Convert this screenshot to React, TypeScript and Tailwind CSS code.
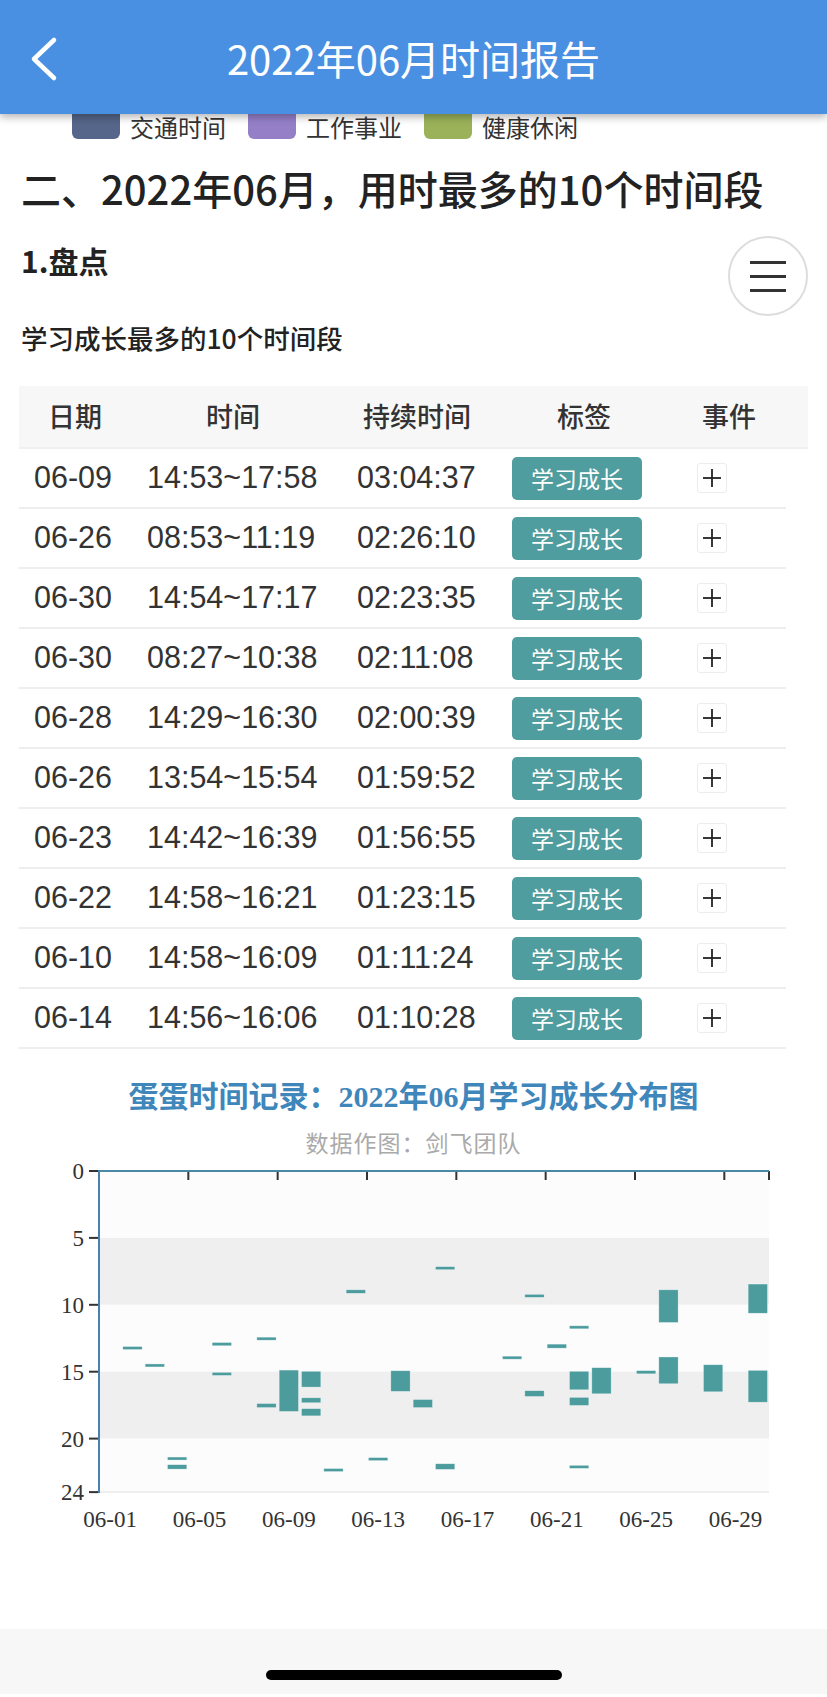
import React from "react";

const rows: [string, string, string][] = [
  ["06-09", "14:53~17:58", "03:04:37"],
  ["06-26", "08:53~11:19", "02:26:10"],
  ["06-30", "14:54~17:17", "02:23:35"],
  ["06-30", "08:27~10:38", "02:11:08"],
  ["06-28", "14:29~16:30", "02:00:39"],
  ["06-26", "13:54~15:54", "01:59:52"],
  ["06-23", "14:42~16:39", "01:56:55"],
  ["06-22", "14:58~16:21", "01:23:15"],
  ["06-10", "14:58~16:09", "01:11:24"],
  ["06-14", "14:56~16:06", "01:10:28"],
];

const bars: [number, number, number][] = [
  [2, 13.12, 13.32],
  [3, 14.42, 14.62],
  [4, 21.38, 21.56],
  [4, 21.95, 22.28],
  [6, 12.82, 13.06],
  [6, 15.05, 15.28],
  [8, 12.42, 12.62],
  [8, 17.38, 17.68],
  [9, 14.88, 17.97],
  [10, 14.97, 16.15],
  [10, 16.95, 17.32],
  [10, 17.76, 18.3],
  [11, 22.24, 22.42],
  [12, 8.88, 9.14],
  [13, 21.42, 21.62],
  [14, 14.93, 16.47],
  [15, 17.08, 17.68],
  [16, 7.15, 7.37],
  [16, 21.88, 22.3],
  [19, 13.84, 14.04],
  [20, 9.22, 9.44],
  [20, 16.42, 16.85],
  [21, 12.94, 13.24],
  [22, 11.57, 11.76],
  [22, 14.97, 16.35],
  [22, 16.92, 17.52],
  [22, 22.0, 22.18],
  [23, 14.7, 16.65],
  [25, 14.92, 15.16],
  [26, 8.88, 11.32],
  [26, 13.9, 15.9],
  [28, 14.48, 16.5],
  [30, 8.45, 10.63],
  [30, 14.9, 17.28],
];

const X0 = 99;
const DW = 22.333;
const Y0 = 14;
const HS = 13.38;
const XR = X0 + 30 * DW;

function Chart() {
  const yOf = (h: number) => Y0 + h * HS;
  const bands = [
    [0, 5, "#fcfcfc"],
    [5, 10, "#efefef"],
    [10, 15, "#fcfcfc"],
    [15, 20, "#efefef"],
    [20, 24, "#fcfcfc"],
  ] as const;
  return (
    <svg width={827} height={390} className="block">
      {bands.map(([a, b, c]) => (
        <rect key={a} x={X0} y={yOf(a)} width={XR - X0} height={yOf(b) - yOf(a)} fill={c} />
      ))}
      <line x1={X0} x2={XR} y1={yOf(24)} y2={yOf(24)} stroke="#eeeeee" strokeWidth={2} />
      {bars.map(([d, s, e], i) => {
        const h = Math.max((e - s) * HS, 3);
        return (
          <rect
            key={i}
            x={X0 + (d - 1) * DW + 1.5}
            y={yOf(s)}
            width={19.3}
            height={h}
            fill="#4c9c9e"
            stroke="#ffffff"
            strokeOpacity={0.5}
            strokeWidth={0.6}
          />
        );
      })}
      {[0, 4, 8, 12, 16, 20, 24, 28, 30].map((d) => (
        <line key={d} x1={X0 + d * DW} x2={X0 + d * DW} y1={Y0} y2={Y0 + 9} stroke="#333" strokeWidth={2} />
      ))}
      {[0, 5, 10, 15, 20, 24].map((h) => (
        <g key={h}>
          <line x1={89} x2={X0} y1={yOf(h)} y2={yOf(h)} stroke="#333" strokeWidth={2} />
          <text
            x={84}
            y={yOf(h) + 8}
            textAnchor="end"
            fontFamily="'Liberation Serif', serif"
            fontSize={23}
            fill="#333"
          >
            {h}
          </text>
        </g>
      ))}
      <line x1={X0} x2={X0} y1={Y0 - 1} y2={yOf(24) + 1} stroke="#4a80b0" strokeWidth={2} />
      <line x1={X0} x2={XR} y1={Y0} y2={Y0} stroke="#4a89a6" strokeWidth={2} />
      {["06-01", "06-05", "06-09", "06-13", "06-17", "06-21", "06-25", "06-29"].map((l, i) => (
        <text
          key={l}
          x={X0 + (i * 4 + 0.5) * DW}
          y={370}
          textAnchor="middle"
          fontFamily="'Liberation Serif', serif"
          fontSize={23}
          fill="#333"
        >
          {l}
        </text>
      ))}
    </svg>
  );
}

export default function App() {
  return (
    <div className="relative w-[827px] h-[1697px] overflow-hidden bg-white font-['Noto_Sans_CJK_SC','Noto_Sans',sans-serif] text-[#333]">
      {/* Header */}
      <div className="relative z-10 h-[114px] bg-[#4a90e2] shadow-[0_3px_8px_rgba(0,0,0,0.3)] flex items-center justify-center">
        <svg className="absolute left-[30px] top-[36px]" width={30} height={46} viewBox="0 0 30 46">
          <polyline points="24,4 4,23 24,42" fill="none" stroke="#fff" strokeWidth={4.5} strokeLinecap="round" strokeLinejoin="round" />
        </svg>
        <div className="text-white text-[40px] leading-[48px] mt-[2px]">2022年06月时间报告</div>
      </div>

      {/* Legend (partially hidden under the header) */}
      <div className="h-[27px] flex items-start pl-[72px]">
        <div className="w-[48px] h-[25px] rounded-b-[6px] bg-[#56668a]" />
        <div className="ml-[10px] text-[24px] leading-[26px] text-[#333]">交通时间</div>
        <div className="ml-[22px] w-[48px] h-[25px] rounded-b-[6px] bg-[#9580c8]" />
        <div className="ml-[10px] text-[24px] leading-[26px] text-[#333]">工作事业</div>
        <div className="ml-[22px] w-[48px] h-[25px] rounded-b-[6px] bg-[#9bb25a]" />
        <div className="ml-[10px] text-[24px] leading-[26px] text-[#333]">健康休闲</div>
      </div>

      {/* Heading */}
      <div className="mt-[23px] pl-[21px] text-[40px] leading-[48px] font-medium text-[#222] whitespace-nowrap">
        二、2022年06月，用时最多的10个时间段
      </div>

      <div className="mt-[30px] pl-[21px] text-[30px] leading-[36px] font-bold text-[#222]">1.盘点</div>

      <div className="mt-[43px] pl-[21px] text-[26.5px] leading-[34px] font-medium text-[#222]">
        学习成长最多的10个时间段
      </div>

      {/* Table */}
      <div className="mt-[31px] pl-[19px]">
        <div className="w-[789px] h-[63px] bg-[#f7f7f7] grid grid-cols-[112px_204px_164px_170px_120px] items-center text-[27px] font-medium text-[#333] border-b-2 border-[#f0f0f0]">
          <div className="text-center">日期</div>
          <div className="text-center">时间</div>
          <div className="text-center">持续时间</div>
          <div className="text-center">标签</div>
          <div className="text-center">事件</div>
        </div>
        {rows.map((r, i) => (
          <div
            key={i}
            className="w-[767px] h-[60px] grid grid-cols-[112px_204px_164px_170px_117px] items-center text-[30.5px] text-[#333] border-b-2 border-[#eeeeee]"
          >
            <div className="pl-[15px] font-['Liberation_Sans','Noto_Sans_CJK_SC',sans-serif]">{r[0]}</div>
            <div className="pl-[16px] font-['Liberation_Sans','Noto_Sans_CJK_SC',sans-serif]">{r[1]}</div>
            <div className="pl-[22px] font-['Liberation_Sans','Noto_Sans_CJK_SC',sans-serif]">{r[2]}</div>
            <div className="pl-[13px]">
              <div className="w-[130px] h-[43px] rounded-[5px] bg-[#4f9d9e] text-white text-[23px] flex items-center justify-center">
                学习成长
              </div>
            </div>
            <div className="pl-[28px]">
              <div className="w-[30px] h-[30px] rounded-[3px] border border-[#ececec] bg-white flex items-center justify-center">
                <svg width={20} height={20} viewBox="0 0 20 20">
                  <line x1={1} x2={19} y1={10} y2={10} stroke="#222" strokeWidth={1.8} />
                  <line x1={10} x2={10} y1={1} y2={19} stroke="#222" strokeWidth={1.8} />
                </svg>
              </div>
            </div>
          </div>
        ))}
      </div>

      {/* Chart */}
      <div className="mt-[29px] text-center text-[30px] leading-[38px] font-bold text-[#3f86bb] font-['Liberation_Serif','Noto_Sans_CJK_SC',serif]">
        蛋蛋时间记录：2022年06月学习成长分布图
      </div>
      <div className="mt-[11px] text-center text-[23px] leading-[30px] text-[#aaaaaa] tracking-[1px]">
        数据作图：剑飞团队
      </div>
      <Chart />

      <div className="h-[82px]" />

      {/* Bottom bar */}
      <div className="h-[65px] bg-[#f7f7f7] flex justify-center pt-[41px]">
        <div className="w-[296px] h-[10px] rounded-full bg-black" />
      </div>

      {/* Floating menu button */}
      <div className="absolute left-[728px] top-[236px] w-[80px] h-[80px] rounded-full border-2 border-[#dddddd] bg-white flex flex-col items-center justify-center gap-[11px]">
        <div className="w-[36px] h-[3px] bg-[#333]" />
        <div className="w-[36px] h-[3px] bg-[#333]" />
        <div className="w-[36px] h-[3px] bg-[#333]" />
      </div>
    </div>
  );
}
